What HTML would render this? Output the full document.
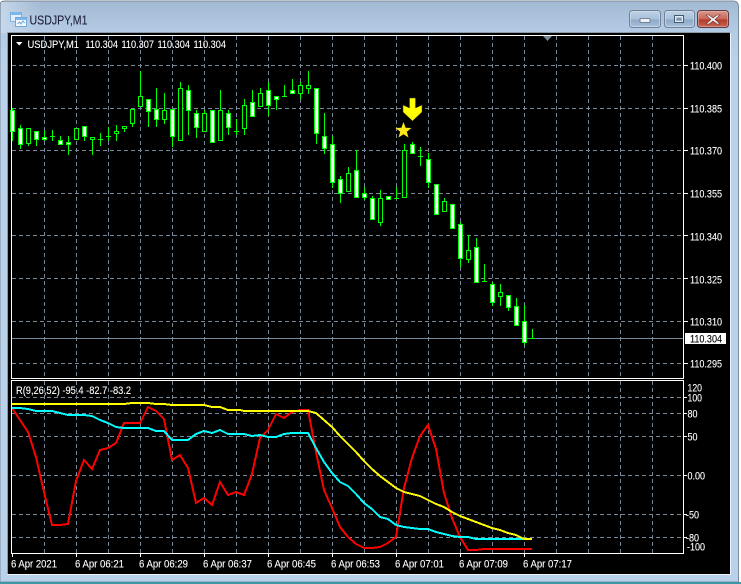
<!DOCTYPE html>
<html><head><meta charset="utf-8"><style>
html,body{margin:0;padding:0;background:#fff;width:741px;height:584px;overflow:hidden}
svg{display:block}
text{font-family:"Liberation Sans",sans-serif;font-size:11px;fill:#fff;stroke:#fff;stroke-width:.12px}
</style></head><body>
<svg width="741" height="584" viewBox="0 0 741 584" xmlns="http://www.w3.org/2000/svg">
<defs>
<linearGradient id="fr" gradientUnits="userSpaceOnUse" x1="0" y1="0" x2="0" y2="584"><stop offset="0" stop-color="#a3b9d2"/><stop offset=".055" stop-color="#b3cbe5"/><stop offset=".1" stop-color="#b9d1ea"/><stop offset="1" stop-color="#b9d1ea"/></linearGradient>
<linearGradient id="lf" x1="0" y1="0" x2="1" y2="0"><stop offset="0" stop-color="#d0dfee" stop-opacity=".7"/><stop offset="1" stop-color="#d0dfee" stop-opacity="0"/></linearGradient>
<linearGradient id="bt" x1="0" y1="0" x2="0" y2="1"><stop offset="0" stop-color="#c0d3e6"/><stop offset=".5" stop-color="#a9c1da"/><stop offset=".55" stop-color="#8faac6"/><stop offset="1" stop-color="#a8c2dc"/></linearGradient>
<linearGradient id="rd" x1="0" y1="0" x2="0" y2="1"><stop offset="0" stop-color="#dc9a8e"/><stop offset=".5" stop-color="#c9675a"/><stop offset=".55" stop-color="#b23a2b"/><stop offset="1" stop-color="#c9695a"/></linearGradient>
</defs>
<!-- window frame -->
<rect x="0" y="0" width="741" height="584" fill="#fff"/>
<path d="M0 582V5Q0 1 5 1H733Q738 1 738.500 6V582Z" fill="url(#fr)" stroke="#7d8b99" stroke-width="1"/>
<rect x="1" y="2" width="40" height="31" fill="url(#lf)"/>
<rect x="0" y="582" width="741" height="2" fill="#3f97a8"/>
<rect x="7" y="32" width="723" height="543" fill="#8a99a8"/>
<rect x="730" y="33" width="1" height="542" fill="#eef4fa"/>
<rect x="7" y="574" width="724" height="1" fill="#eef4fa"/>
<rect x="8" y="33" width="722" height="541" fill="#000"/>
<!-- title icon -->
<rect x="10.500" y="12.500" width="11" height="9" fill="#e4effa" stroke="#7db3e4"/>
<rect x="11" y="13" width="10" height="2" fill="#7dbbee"/>
<rect x="15.500" y="17.500" width="11" height="9" fill="#f2f8fd" stroke="#6fa8dc"/>
<rect x="16" y="18" width="10" height="2" fill="#7dbbee"/>
<path d="M17.500 24l2-2 1.500 2 2-3 1.500 2" fill="none" stroke="#6fa8dc"/>
<text x="29.500" y="24.500" style="font-size:12.500px;fill:#20203c;stroke:#20203c;stroke-width:.1px" textLength="58" lengthAdjust="spacingAndGlyphs">USDJPY,M1</text>
<!-- window buttons -->
<rect x="629.500" y="10.500" width="31" height="17" rx="3" fill="url(#bt)" stroke="#6f8196"/>
<rect x="630.500" y="11.500" width="29" height="15" rx="2" fill="none" stroke="#d5e2ef" stroke-opacity=".6"/>
<rect x="664.500" y="10.500" width="30" height="17" rx="3" fill="url(#bt)" stroke="#6f8196"/>
<rect x="665.500" y="11.500" width="28" height="15" rx="2" fill="none" stroke="#d5e2ef" stroke-opacity=".6"/>
<rect x="697.500" y="10.500" width="31" height="17" rx="3" fill="url(#rd)" stroke="#5e3a44"/>
<rect x="698.500" y="11.500" width="29" height="15" rx="2" fill="none" stroke="#e8c0b8" stroke-opacity=".5"/>
<rect x="640" y="18.500" width="10" height="4" rx="1" fill="#eef2f6" stroke="#5a6b80" stroke-width=".8"/>
<rect x="674.500" y="15.500" width="9" height="7" fill="none" stroke="#46586e" stroke-width="1"/>
<rect x="675.500" y="16.500" width="7" height="5" fill="none" stroke="#e6edf4" stroke-width="1"/>
<rect x="677" y="18" width="4" height="2" fill="#7d93ac"/>
<path d="M709 15l4 3 4-3h3l-5 4.500 5 4.500h-3l-4-3-4 3h-3l5-4.500-5-4.500z" fill="#f2f2f2" stroke="#6e3a36" stroke-width=".6"/>
<!-- grid -->
<path d="M44.500 36V379M76.500 36V379M108.500 36V379M140.500 36V379M172.500 36V379M204.500 36V379M236.500 36V379M268.500 36V379M300.500 36V379M332.500 36V379M364.500 36V379M396.500 36V379M428.500 36V379M460.500 36V379M492.500 36V379M524.500 36V379M556.500 36V379M588.500 36V379M620.500 36V379M652.500 36V379M44.500 381V553M76.500 381V553M108.500 381V553M140.500 381V553M172.500 381V553M204.500 381V553M236.500 381V553M268.500 381V553M300.500 381V553M332.500 381V553M364.500 381V553M396.500 381V553M428.500 381V553M460.500 381V553M492.500 381V553M524.500 381V553M556.500 381V553M588.500 381V553M620.500 381V553M652.500 381V553M12 65.500H684M12 108.500H684M12 150.500H684M12 193.500H684M12 235.500H684M12 278.500H684M12 321.500H684M12 363.500H684M12 397.500H684M12 413.500H684M12 436.500H684M12 475.500H684M12 514.500H684M12 537.500H684" stroke="#778899" stroke-width="1" stroke-dasharray="4 3" fill="none"/>
<path d="M12 338.500H684" stroke="#778899" stroke-width="1"/>
<polygon points="543,36 552,36 547.500,41" fill="#778899"/>
<!-- wicks -->
<path d="M12.500 108V141M20.500 125V149M28.500 128V146M36.500 131V146M44.500 130V141M50 136.500h5M52.500 130V141M60.500 136V145M68.500 136V155M84.500 126V141M92.500 137V155M98 139.500h5M100.500 133V146M106 136.500h5M108.500 127V141M116.500 125V141M124.500 126V132M132.500 109V127M140.500 71V107M148.500 99V127M156.500 88V127M164.500 93V124M172.500 109V147M180.500 82V141M188.500 85V135M196.500 110V138M204.500 110V132M220.500 90V141M228.500 110V135M234 131.500h5M236.500 119V135M244.500 99V135M252.500 90V117M260.500 88V107M268.500 82V116M276.500 96V110M282 96.500h5M284.500 85V97M292.500 79V94M300.500 82V99M308.500 71V94M316.500 88V144M324.500 113V154M332.500 136V188M340.500 176V203M348.500 167V192M356.500 150V198M364.500 187V200M372.500 196V220M380.500 190V226M394 198.500h5M396.500 187V199M404.500 144V198M412.500 142V154M418 156.500h5M420.500 147V166M428.500 153V188M444.500 198V212M460.500 222V267M468.500 235V263M476.500 238V283M482 281.500h5M484.500 264V282M492.500 282V306M500.500 284V306M508.500 295V311M516.500 298V326M524.500 305V345M530 338.500h5M532.500 329V339" stroke="#00ff00" stroke-width="1" fill="none"/>
<!-- black bodies -->
<path d="M26.500 128.500h4v15h-4zM74.500 128.500h4v11h-4zM90.500 137.500h4v2h-4zM114.500 131.500h4v2h-4zM122.500 126.500h4v2h-4zM130.500 109.500h4v14h-4zM138.500 96.500h4v10h-4zM162.500 110.500h4v9h-4zM178.500 88.500h4v52h-4zM202.500 113.500h4v18h-4zM218.500 110.500h4v30h-4zM242.500 105.500h4v23h-4zM258.500 93.500h4v13h-4zM298.500 85.500h4v8h-4zM306.500 85.500h4v3h-4zM346.500 173.500h4v18h-4zM378.500 198.500h4v24h-4zM402.500 150.500h4v47h-4zM442.500 201.500h4v10h-4zM466.500 250.500h4v9h-4zM498.500 292.500h4v4h-4z" fill="#000" stroke="#00ff00" stroke-width="1"/>
<!-- white bodies -->
<path d="M10.500 110.500h4v21h-4zM18.500 128.500h4v16h-4zM34.500 131.500h4v8h-4zM42.500 137.500h4v2h-4zM58.500 140.500h4v4h-4zM66.500 142.500h4v2h-4zM82.500 126.500h4v10h-4zM146.500 99.500h4v12h-4zM154.500 109.500h4v10h-4zM170.500 109.500h4v27h-4zM186.500 90.500h4v20h-4zM194.500 113.500h4v14h-4zM210.500 110.500h4v32h-4zM226.500 113.500h4v14h-4zM250.500 102.500h4v14h-4zM266.500 90.500h4v15h-4zM274.500 96.500h4v3h-4zM290.500 90.500h4v3h-4zM314.500 88.500h4v45h-4zM322.500 136.500h4v12h-4zM330.500 144.500h4v38h-4zM338.500 179.500h4v14h-4zM354.500 170.500h4v27h-4zM362.500 193.500h4v4h-4zM370.500 198.500h4v21h-4zM386.500 196.500h4v3h-4zM410.500 144.500h4v9h-4zM426.500 159.500h4v23h-4zM434.500 184.500h4v30h-4zM450.500 204.500h4v24h-4zM458.500 224.500h4v34h-4zM474.500 247.500h4v35h-4zM490.500 284.500h4v18h-4zM506.500 295.500h4v12h-4zM514.500 306.500h4v19h-4zM522.500 321.500h4v21h-4z" fill="#fff" stroke="#00ff00" stroke-width="1"/>
<!-- arrow and star -->
<polygon points="409.500,98 415.500,98 415.500,108 422,105 422,112 412.500,121 403,112 403,105 409.500,108" fill="#ffff00" stroke="#3a3a00" stroke-width=".5"/>
<polygon points="403.500,122 405.600,127.700 411.500,128 406.800,131.700 408.500,137.500 403.500,134.200 398.500,137.500 400.200,131.700 395.500,128 401.400,127.700" fill="#ffe81a"/>
<!-- indicator lines -->
<g fill="none" stroke-width="2" shape-rendering="crispEdges">
<polyline stroke="#ff0000" points="12,408 20,420 28,432 36,457 44,492 52,525 60,525 68,524 76,481 84,460 92,469 100,450 108,448 116,443 124,423 132,423 140,423 148,407 156,411 164,419 172,460 180,455 188,468 196,503 204,498 212,505 220,482 228,495 236,492 244,495 252,474 260,438 268,430 276,414 284,418 292,412 300,410 308,410 316,452 324,490 332,508 340,527 348,537 356,544 364,548 372,548 380,547 388,543 396,537 404,488 412,458 420,436 428,425 436,449 444,493 452,518 460,537 468,550 476,550 484,549 532,549"/>
<polyline stroke="#00ffff" points="12,408 20,408 28,409 36,411 44,411 52,411 60,413 68,415 76,415 84,415 92,416 100,420 108,423 116,427 124,428 148,428 156,431 164,431 172,440 180,440 188,440 196,434 204,431 212,433 220,430 228,434 244,434 252,436 260,435 268,437 276,437 284,434 292,433 308,433 316,448 324,462 332,473 340,482 348,486 356,494 364,503 372,509 380,517 388,519 396,525 404,527 412,528 420,529 428,529 436,532 444,534 452,536 460,537 468,537 476,539 484,539 532,539"/>
<polyline stroke="#ffff00" points="12,404 124,404 132,403 148,403 156,404 164,404 172,405 204,405 212,407 220,407 228,410 240,410 244,411 308,411 316,413 324,420 332,427 340,436 348,444 356,452 364,461 372,469 380,476 388,482 396,488 404,492 412,494 420,496 428,500 436,504 444,507 452,512 460,516 468,519 476,522 484,525 492,528 500,530 508,533 516,535 524,539 532,539"/>
</g>
<!-- panel borders and ticks -->
<path d="M11.500 35.500H683.500V378.500H11.500ZM11.500 380.500H683.500V553.500H11.500Z" fill="none" stroke="#fff" stroke-width="1"/>
<path d="M684 65.500h4M684 108.500h4M684 150.500h4M684 193.500h4M684 235.500h4M684 278.500h4M684 321.500h4M684 363.500h4M684 397.500h3M684 413.500h3M684 436.500h3M684 475.500h3M684 514.500h3M684 537.500h3M12.500 554v3M76.500 554v3M140.500 554v3M204.500 554v3M268.500 554v3M332.500 554v3M396.500 554v3M460.500 554v3M524.500 554v3" stroke="#fff" stroke-width="1"/>
<!-- legend -->
<polygon points="16,42 22.500,42 19.250,45.500" fill="#fff"/>
<text x="27.500" y="48" textLength="51.500" lengthAdjust="spacingAndGlyphs">USDJPY,M1</text>
<text x="85.500" y="48" textLength="32.500" lengthAdjust="spacingAndGlyphs">110.304</text>
<text x="121.500" y="48" textLength="32.500" lengthAdjust="spacingAndGlyphs">110.307</text>
<text x="157.500" y="48" textLength="32.500" lengthAdjust="spacingAndGlyphs">110.304</text>
<text x="193.500" y="48" textLength="32.500" lengthAdjust="spacingAndGlyphs">110.304</text>
<text x="16" y="394" textLength="115" lengthAdjust="spacingAndGlyphs">R(9,26,52) -95.4 -82.7 -83.2</text>
<!-- price labels -->
<text x="690" y="69.500" textLength="32" lengthAdjust="spacingAndGlyphs">110.400</text>
<text x="690" y="112.500" textLength="32" lengthAdjust="spacingAndGlyphs">110.385</text>
<text x="690" y="154.500" textLength="32" lengthAdjust="spacingAndGlyphs">110.370</text>
<text x="690" y="197.500" textLength="32" lengthAdjust="spacingAndGlyphs">110.355</text>
<text x="690" y="240.500" textLength="32" lengthAdjust="spacingAndGlyphs">110.340</text>
<text x="690" y="283.500" textLength="32" lengthAdjust="spacingAndGlyphs">110.325</text>
<text x="690" y="325.500" textLength="32" lengthAdjust="spacingAndGlyphs">110.310</text>
<text x="690" y="367.500" textLength="32" lengthAdjust="spacingAndGlyphs">110.295</text>
<rect x="685" y="333" width="41" height="11" fill="#fff"/>
<text x="690" y="342.500" textLength="32" lengthAdjust="spacingAndGlyphs" style="fill:#000;stroke:#000">110.304</text>
<!-- indicator scale -->
<text x="687.500" y="391.500" textLength="14.500" lengthAdjust="spacingAndGlyphs">120</text>
<text x="687.500" y="401.500" textLength="14.500" lengthAdjust="spacingAndGlyphs">100</text>
<text x="687.500" y="417.500" textLength="10" lengthAdjust="spacingAndGlyphs">80</text>
<text x="687.500" y="440.500" textLength="10" lengthAdjust="spacingAndGlyphs">50</text>
<text x="687.500" y="479.500" textLength="17.500" lengthAdjust="spacingAndGlyphs">0.00</text>
<text x="686" y="518.500" textLength="13" lengthAdjust="spacingAndGlyphs">-50</text>
<text x="686" y="541.500" textLength="13" lengthAdjust="spacingAndGlyphs">-80</text>
<text x="687" y="550.500" textLength="18" lengthAdjust="spacingAndGlyphs">-100</text>
<!-- time labels -->
<text x="11" y="567.500" textLength="46" lengthAdjust="spacingAndGlyphs">6 Apr 2021</text>
<text x="75" y="567.500" textLength="49" lengthAdjust="spacingAndGlyphs">6 Apr 06:21</text>
<text x="139" y="567.500" textLength="49" lengthAdjust="spacingAndGlyphs">6 Apr 06:29</text>
<text x="203" y="567.500" textLength="49" lengthAdjust="spacingAndGlyphs">6 Apr 06:37</text>
<text x="267" y="567.500" textLength="49" lengthAdjust="spacingAndGlyphs">6 Apr 06:45</text>
<text x="331" y="567.500" textLength="49" lengthAdjust="spacingAndGlyphs">6 Apr 06:53</text>
<text x="395" y="567.500" textLength="49" lengthAdjust="spacingAndGlyphs">6 Apr 07:01</text>
<text x="459" y="567.500" textLength="49" lengthAdjust="spacingAndGlyphs">6 Apr 07:09</text>
<text x="523" y="567.500" textLength="49" lengthAdjust="spacingAndGlyphs">6 Apr 07:17</text>
</svg>
</body></html>
